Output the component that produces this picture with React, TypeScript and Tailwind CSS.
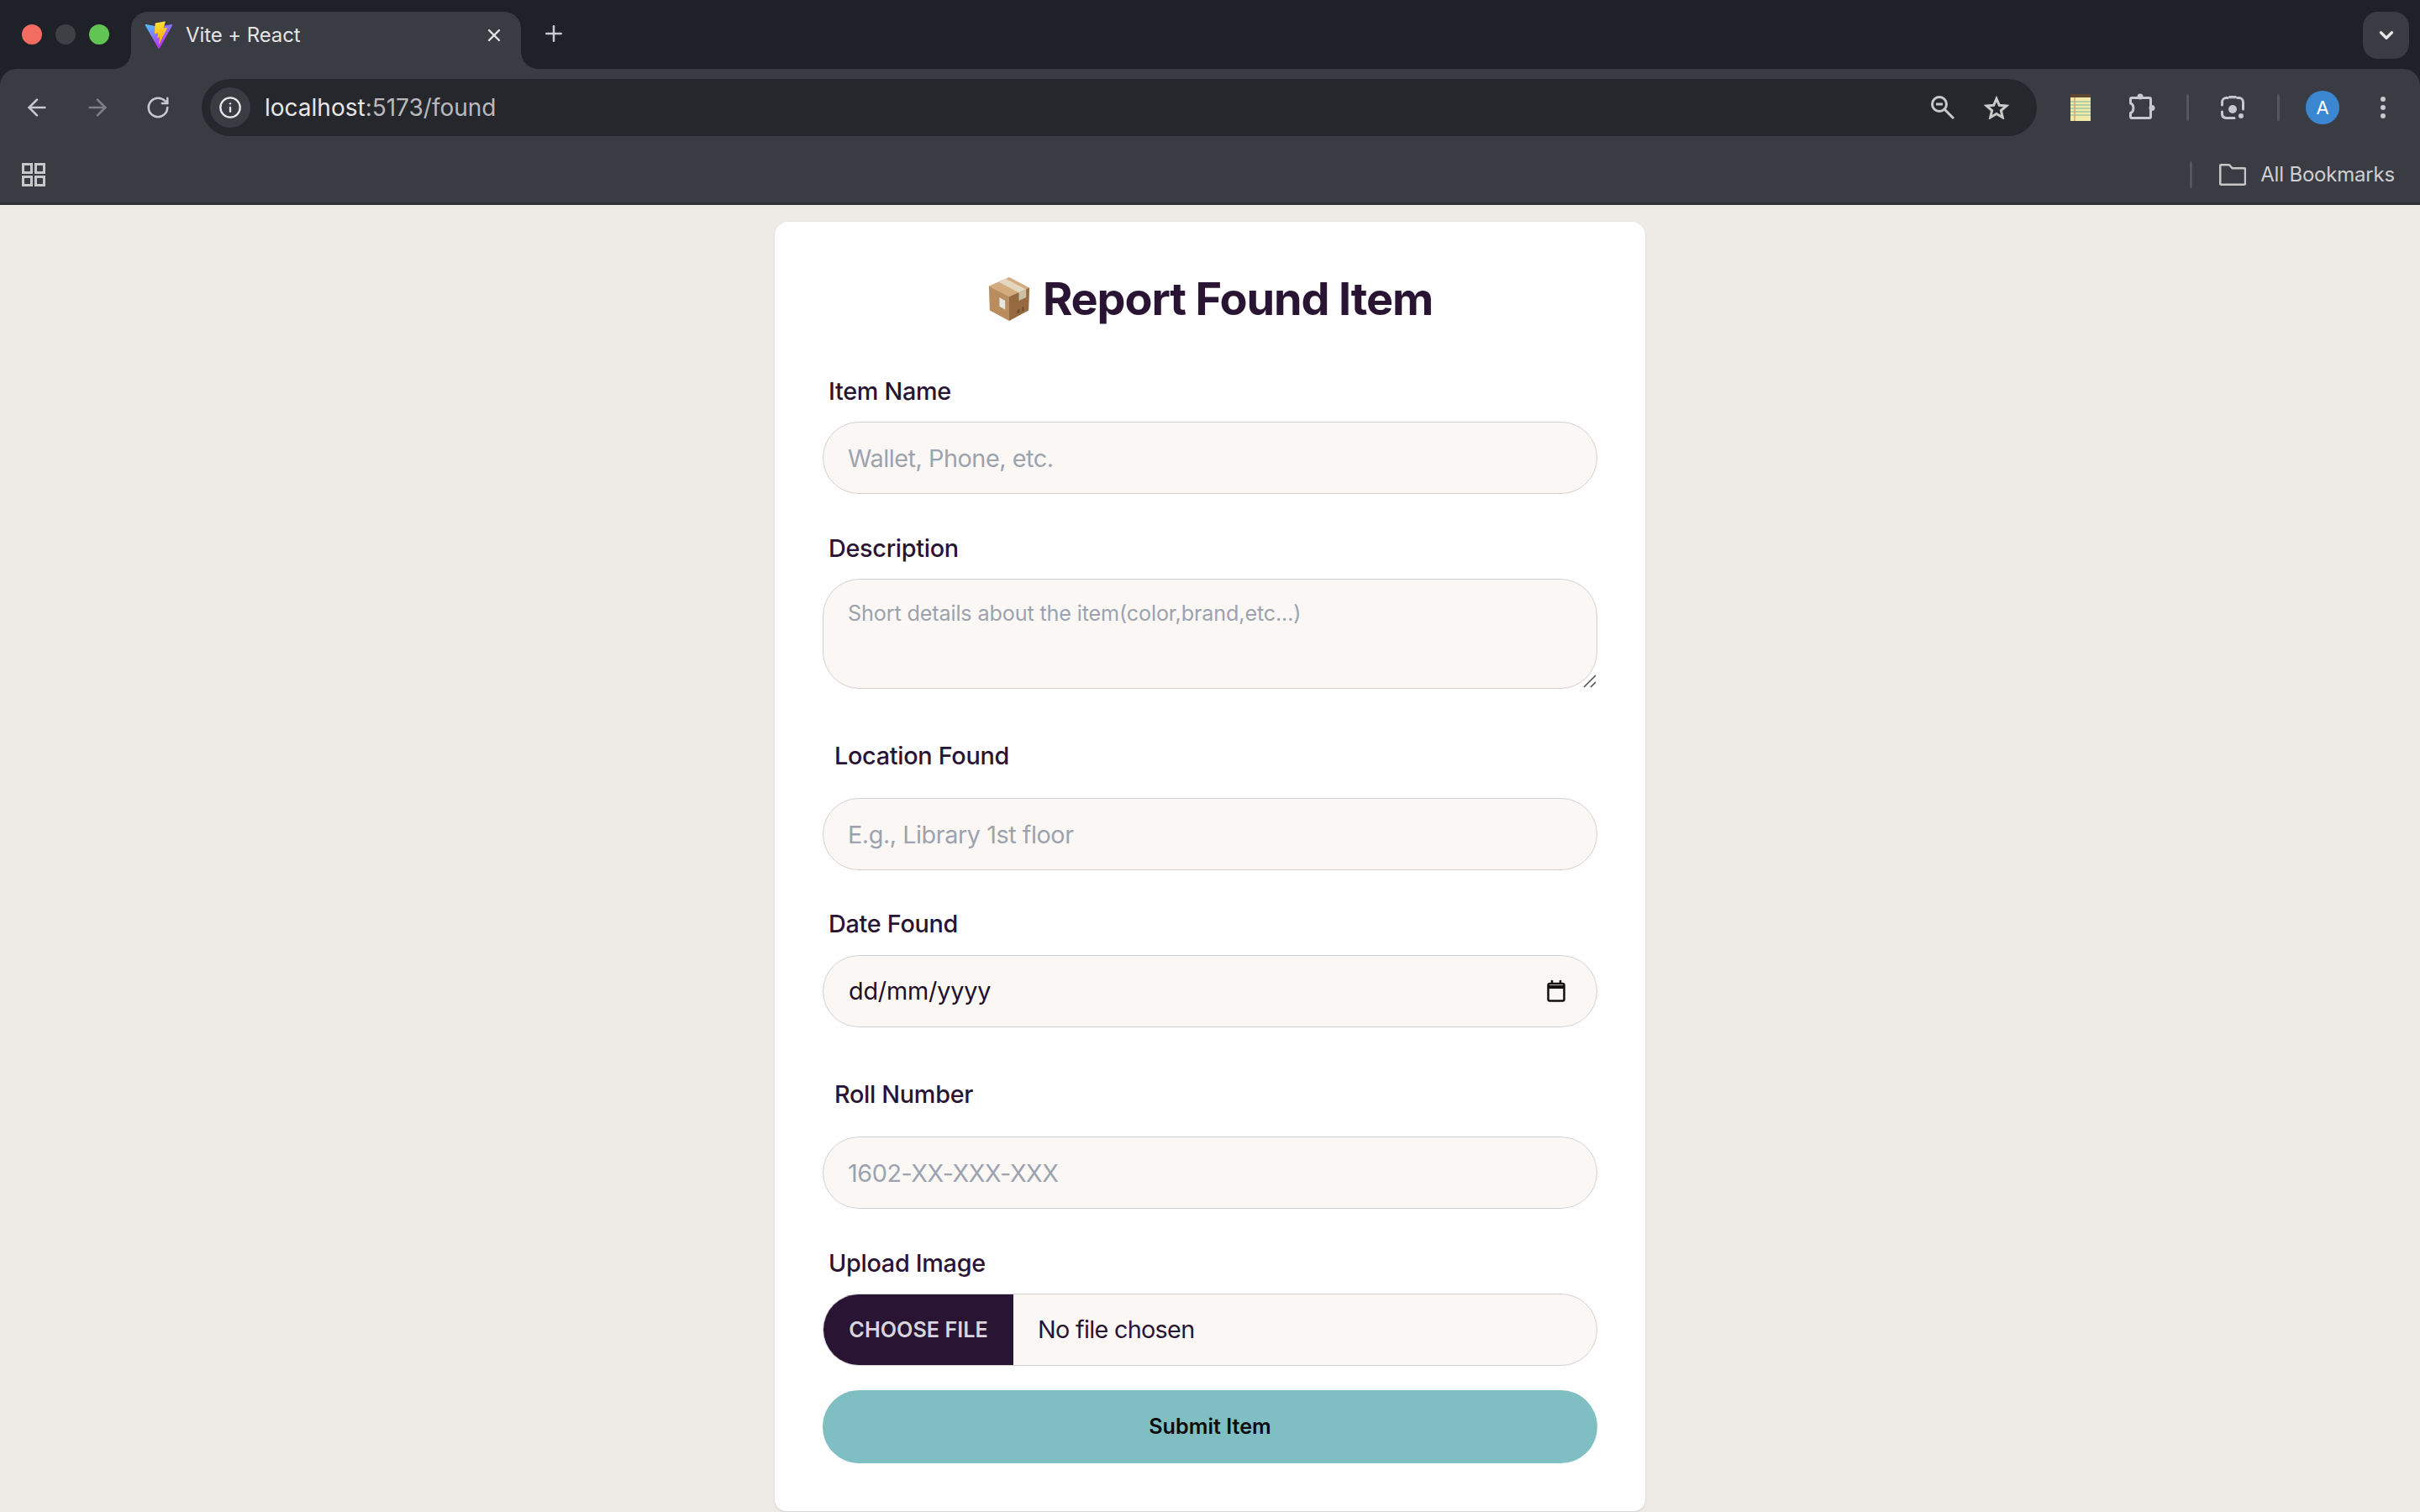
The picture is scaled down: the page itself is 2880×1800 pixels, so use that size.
import { ArrowLeft, ArrowRight, ChevronDown, Info, Plus, RotateCw, X } from "lucide-react";

function ViteLogo() {
  return (
    <svg viewBox="0 0 410 404" className="h-[34px] w-[34px] shrink-0" fill="none">
      <path
        d="M399.641 59.5246L215.643 388.545C211.844 395.338 202.084 395.378 198.228 388.618L10.5817 59.5563C6.38087 52.1896 12.6802 43.2665 21.0281 44.7586L205.223 77.6824C206.398 77.8924 207.601 77.8904 208.776 77.6763L389.119 44.8058C397.439 43.2894 403.768 52.1434 399.641 59.5246Z"
        fill="url(#vite-a)"
      />
      <path
        d="M292.965 1.5744L156.801 28.2552C154.563 28.6937 152.906 30.5903 152.771 32.8664L144.395 174.33C144.198 177.662 147.258 180.248 150.51 179.498L188.42 170.749C191.967 169.931 195.172 173.055 194.443 176.622L183.18 231.775C182.422 235.487 185.907 238.661 189.532 237.56L212.947 230.446C216.577 229.344 220.065 232.527 219.297 236.242L201.398 322.875C200.278 328.294 207.486 331.249 210.492 326.603L212.5 323.5L323.454 102.072C325.312 98.3645 322.108 94.137 318.036 94.9228L279.014 102.454C275.347 103.161 272.227 99.746 273.262 96.1583L298.731 7.86689C299.767 4.27314 296.636 0.855181 292.965 1.5744Z"
        fill="url(#vite-b)"
      />
      <defs>
        <linearGradient id="vite-a" x1="6" y1="33" x2="235" y2="344" gradientUnits="userSpaceOnUse">
          <stop stopColor="#41D1FF" />
          <stop offset="1" stopColor="#BD34FE" />
        </linearGradient>
        <linearGradient id="vite-b" x1="194.651" y1="8.81818" x2="236.076" y2="292.989" gradientUnits="userSpaceOnUse">
          <stop stopColor="#FFEA83" />
          <stop offset="0.0833" stopColor="#FFDD35" />
          <stop offset="1" stopColor="#FFA800" />
        </linearGradient>
      </defs>
    </svg>
  );
}

function BoxEmoji() {
  return (
    <svg viewBox="0 0 52 56" className="h-[54px] w-[52px] shrink-0">
      <path d="M1 12 26 1l25 13-25 11z" fill="#d2ab7e" />
      <path d="M1 12l25 13v30L2 42z" fill="#b98d5e" />
      <path d="M26 25l25-11-1 28-24 13z" fill="#96693f" />
      <path d="M13 7l25 13 9-4-25-13z" fill="#e4d6bf" />
      <path d="M38 20l9-4v10l-9 4z" fill="#cdbfa6" />
      <path d="M14 26l7 4v11l-7-4z" fill="#e6e6e4" />
      <path d="M36 42l3-2v4l-3 2zM42 38l2-1v5l-2 1z" fill="#6b4a2c" />
    </svg>
  );
}

function Grid() {
  return (
    <svg viewBox="0 0 28 28" className="h-7 w-7" fill="none" stroke="#c7c7c9" strokeWidth="3">
      <rect x="1.5" y="1.5" width="10" height="10" />
      <rect x="16.5" y="1.5" width="10" height="10" />
      <rect x="1.5" y="16.5" width="10" height="10" />
      <rect x="16.5" y="16.5" width="10" height="10" />
    </svg>
  );
}

function Puzzle() {
  return (
    <svg viewBox="0 0 34 36" className="h-9 w-[34px]" fill="none" stroke="#c6c8cf" strokeWidth="3" strokeLinejoin="round">
      <path d="M5 6.5H26A1.5 1.5 0 0 1 27.5 8V29A1.5 1.5 0 0 1 26 30.5H5A1.5 1.5 0 0 1 3.5 29V24.5C8 23 8 14.500 3.500 13V8A1.5 1.5 0 0 1 5 6.500Z" />
      <circle cx="15" cy="5" r="3.5" fill="#c6c8cf" stroke="none" />
      <circle cx="29" cy="18.500" r="3.500" fill="#c6c8cf" stroke="none" />
    </svg>
  );
}

function Lens() {
  return (
    <svg viewBox="0 0 32 32" className="h-8 w-8" fill="none" stroke="#c6c8cf" strokeWidth="3" strokeLinecap="round">
      <path d="M10 4.5H8A5 5 0 0 0 3.5 9.500V13M3.500 21V24A5 5 0 0 0 8 28.500H18M22 4.500H24A5 5 0 0 1 28.500 9.500V18" />
      <path d="M10 4.500 12 2.500H20L22 4.500Z" fill="#c6c8cf" strokeWidth="1" />
      <circle cx="16" cy="18" r="5" fill="#c6c8cf" stroke="none" />
      <circle cx="26" cy="26" r="3" fill="#c6c8cf" stroke="none" />
    </svg>
  );
}

function Notepad() {
  return (
    <svg viewBox="0 0 24 32" className="h-8 w-6 shrink-0">
      <rect width="24" height="32" fill="#f0e9a8" />
      <rect width="24" height="4" fill="#5f4630" />
      <path d="M0 9h24M0 13h24M0 17h24M0 21h24M0 25h24" stroke="#9dc4a0" strokeWidth="1.5" />
      <path d="M5 4v28" stroke="#dca07a" strokeWidth="1.5" />
    </svg>
  );
}

function Folder() {
  return (
    <svg viewBox="0 0 32 26" className="h-[26px] w-8" fill="none" stroke="#c7c7c9" strokeWidth="2.5" strokeLinejoin="round">
      <path d="M1.25 2.5A1.25 1.25 0 0 1 3 1.25h9l3.5 4H30a1 1 0 0 1 1 1v17a1.5 1.5 0 0 1-1.5 1.5h-27A1.25 1.25 0 0 1 1.25 23z" />
    </svg>
  );
}

function ZoomIcon() {
  return (
    <svg viewBox="0 0 28 28" className="h-7 w-7 shrink-0" fill="none" stroke="#c9c9cc" strokeWidth="3">
      <circle cx="10" cy="10" r="8.5" />
      <path d="M6 10h8" />
      <path d="M16 16l11 11" />
    </svg>
  );
}

function StarIcon() {
  return (
    <svg viewBox="0 0 30 28" className="h-7 w-[30px] shrink-0" fill="none" stroke="#c9c9cc" strokeWidth="3">
      <path d="M15 3.5 18.3 11.3 26.8 12 20.4 17.6 22.3 25.8 15 21.5 7.7 25.8 9.6 17.6 3.2 12 11.7 11.3z" />
    </svg>
  );
}

function BrowserChrome() {
  return (
    <div className="bg-[#1e2127]">
      <div className="flex h-[82px] items-end pr-[13px]">
        <div className="flex h-full w-[156px] items-center gap-4 pl-[26px]">
          <span className="h-6 w-6 rounded-full bg-[#f26d60]" />
          <span className="h-6 w-6 rounded-full bg-[#3e4045]" />
          <span className="h-6 w-6 rounded-full bg-[#61c554]" />
        </div>
        <div className="relative flex h-[68px] w-[464px] items-center rounded-t-[20px] bg-[#3a3c43] pr-[20px] pb-[12px] pl-4">
          <span className="absolute bottom-0 -left-5 h-5 w-5 bg-[radial-gradient(circle_at_0_0,#1e2127_19.5px,#3a3c43_20px)]" />
          <span className="absolute -right-5 bottom-0 h-5 w-5 bg-[radial-gradient(circle_at_100%_0,#1e2127_19.5px,#3a3c43_20px)]" />
          <ViteLogo />
          <span className="ml-[15px] flex-1 text-[24px] tracking-[-0.1px] text-[#e4e4e6]">Vite + React</span>
          <X size={24} strokeWidth={2.4} className="text-[#e4e4e6]" />
        </div>
        <Plus size={30} strokeWidth={2} className="mb-[27px] ml-[24px] text-[#c8cad2]" />
        <div className="flex-1" />
        <div className="mb-3 flex h-[56px] w-[55px] items-center justify-center rounded-[18px] bg-[#3a3c43]">
          <ChevronDown size={26} strokeWidth={3} className="text-[#e8e8ea]" />
        </div>
      </div>

      <div className="rounded-t-[20px] bg-[#3a3c43]">
        <div className="flex h-[80px] items-center pt-[12px]">
          <div className="flex w-[240px] items-center">
            <ArrowLeft size={32} strokeWidth={2} className="ml-[28px] text-[#c6c8cf]" />
            <ArrowRight size={32} strokeWidth={2} className="ml-[40px] text-[#7d7f85]" />
            <RotateCw size={30} strokeWidth={2} className="ml-[41px] text-[#c6c8cf]" />
          </div>
          <div className="flex h-[68px] w-[2184px] items-center rounded-full bg-[#26272c] pr-[33px] pl-[10px]">
            <span className="flex h-12 w-12 items-center justify-center rounded-full bg-[#3a3c43]">
              <Info size={28} strokeWidth={2} className="text-[#e8e8ea]" />
            </span>
            <span className="ml-[17px] flex-1 text-[28px] text-[#e6e6e8]">
              localhost<span className="text-[#b9b9bd]">:5173/found</span>
            </span>
            <ZoomIcon />
            <div className="ml-[35px]"><StarIcon /></div>
          </div>
          <div className="ml-[40px]"><Notepad /></div>
          <div className="ml-[44px]"><Puzzle /></div>
          <span className="ml-[36px] h-8 w-[3px] rounded bg-[#54565d]" />
          <div className="ml-[36px]"><Lens /></div>
          <span className="ml-[37px] h-8 w-[3px] rounded bg-[#54565d]" />
          <span className="ml-[31px] flex h-10 w-10 items-center justify-center rounded-full bg-[#3a86d0] text-[22px] text-white">A</span>
          <span className="ml-[49px] flex flex-col gap-[4px]">
            <span className="h-[6px] w-[6px] rounded-full bg-[#c9c9cc]" />
            <span className="h-[6px] w-[6px] rounded-full bg-[#c9c9cc]" />
            <span className="h-[6px] w-[6px] rounded-full bg-[#c9c9cc]" />
          </span>
        </div>
        <div className="flex h-[82px] items-center border-b-[3px] border-[#2f3136] pt-[12px] pr-[30px] pl-[26px]">
          <Grid />
          <div className="flex-1" />
          <span className="h-8 w-[3px] rounded bg-[#54565d]" />
          <div className="ml-[32px]"><Folder /></div>
          <span className="ml-[17px] text-[24px] tracking-[-0.2px] text-[#cfcfd2]">All Bookmarks</span>
        </div>
      </div>
    </div>
  );
}

const labelClass = "block pb-[2px] text-[28.8px] leading-[41px] font-medium tracking-[-0.3px] text-[#2a1433]";
const inputClass =
  "block h-[86px] w-full rounded-full border border-[#d3d0d1] bg-[#faf7f4] px-[29px] text-[28.8px] tracking-[-0.45px] text-[#2a1433] placeholder:text-[#9ca3af] outline-none";

function FoundForm() {
  return (
    <div className="mx-auto mt-[20px] w-[1036px] rounded-t-[16px] rounded-b-[14px] bg-white p-[57px] shadow-sm">
      <h1 className="mb-[56px] flex items-center justify-center gap-[14px] pt-[2px] text-[54px] leading-[66px] font-bold tracking-[-1.15px] text-[#2a1433]">
        <BoxEmoji />
        Report Found Item
      </h1>
      <form onSubmit={(e) => e.preventDefault()}>
        <div className="mb-[14px]"><label className={`${labelClass} ml-[7px]`}>Item Name</label></div>
        <input type="text" placeholder="Wallet, Phone, etc." className={inputClass} />

        <div className="mt-[44px] mb-[14px]"><label className={`${labelClass} ml-[7px]`}>Description</label></div>
        <div className="relative">
          <textarea
            rows={2}
            placeholder="Short details about the item(color,brand,etc...)"
            className="block h-[131px] w-full resize-none rounded-[44px] border border-[#d3d0d1] bg-[#faf7f4] px-[29px] py-[22px] text-[25.2px] leading-[36px] tracking-[-0.15px] placeholder:text-[#9ca3af] outline-none"
          />
          <svg viewBox="0 0 16 16" className="absolute right-[1px] bottom-[1px] h-4 w-4" stroke="#4b4b4b" strokeWidth="1.5">
            <path d="M1 15 15 1M9 15l6-6" />
          </svg>
        </div>

        <div className="mt-[59px] mb-[28px]"><label className={`${labelClass} ml-[14px]`}>Location Found</label></div>
        <input type="text" placeholder="E.g., Library 1st floor" className={inputClass} />

        <div className="mt-[43px] mb-[15px]"><label className={`${labelClass} ml-[7px]`}>Date Found</label></div>
        <div className="flex h-[86px] items-center justify-between rounded-full border border-[#d3d0d1] bg-[#faf7f4] pr-[37px] pl-[30px] text-[28.8px] tracking-[-0.2px] text-[#1f1027]">
          <span>dd/mm/yyyy</span>
          <svg viewBox="0 0 22 26" className="h-[26px] w-[22px]" fill="none" stroke="#111" strokeWidth="2.5">
            <rect x="1.5" y="4" width="19" height="20.5" rx="2" />
            <path d="M1.5 8h19" strokeWidth="4" />
            <path d="M6 0v4M16 0v4" />
          </svg>
        </div>

        <div className="mt-[59px] mb-[28px]"><label className={`${labelClass} ml-[14px]`}>Roll Number</label></div>
        <input type="text" placeholder="1602-XX-XXX-XXX" className={inputClass} />

        <div className="mt-[44px] mb-[14px]"><label className={`${labelClass} ml-[7px]`}>Upload Image</label></div>
        <div className="flex h-[86px] items-center overflow-hidden rounded-full border border-[#d3d0d1] bg-[#faf7f4]">
          <span className="flex h-full w-[226px] items-center justify-center bg-[#2a1433] pt-[1px] text-[25.2px] font-semibold text-[#d9d5de]">
            CHOOSE FILE
          </span>
          <span className="ml-[29px] text-[28.8px] tracking-[-0.7px] text-[#2a1433]">No file chosen</span>
        </div>

        <button className="mt-[29px] block h-[87px] w-full rounded-full bg-[#7fbfc4] text-[25.2px] font-semibold text-[#0b0b0b]">
          Submit Item
        </button>
      </form>
    </div>
  );
}

export default function App() {
  return (
    <div className="min-h-[1800px] overflow-hidden bg-[#eeebe6] font-['Inter',sans-serif]">
      <BrowserChrome />
      <FoundForm />
    </div>
  );
}
